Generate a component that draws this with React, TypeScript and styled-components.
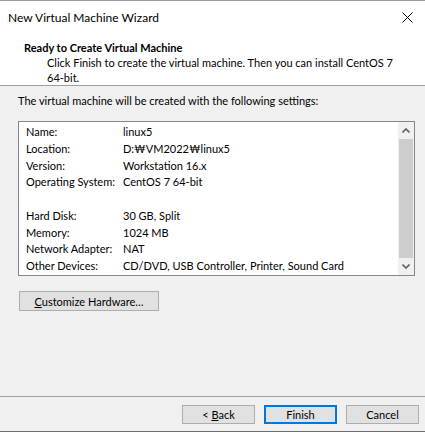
import React from 'react';
import styled, { createGlobalStyle } from 'styled-components';

const GlobalStyle = createGlobalStyle`
  *, *::before, *::after {
    box-sizing: border-box;
  }
  html, body {
    margin: 0;
    padding: 0;
    background: #ffffff;
  }
  body {
    font-family: Lato, 'Noto Sans', 'Liberation Sans', sans-serif;
    font-size: 11px;
    color: #000000;
  }
`;

const settings: [string, string][] = [
  ['Name:', 'linux5'],
  ['Location:', 'D:₩VM2022₩linux5'],
  ['Version:', 'Workstation 16.x'],
  ['Operating System:', 'CentOS 7 64-bit'],
  ['', ''],
  ['Hard Disk:', '30 GB, Split'],
  ['Memory:', '1024 MB'],
  ['Network Adapter:', 'NAT'],
  ['Other Devices:', 'CD/DVD, USB Controller, Printer, Sound Card'],
];

const App = () => {
  return (
    <>
      <GlobalStyle />
      <Window>
        <TitleBar>
          <TitleText>New Virtual Machine Wizard</TitleText>
          <CloseButton>
            <svg width="11" height="11" viewBox="0 0 11 11">
              <path d="M0.5 0.5 L10.5 10.5 M10.5 0.5 L0.5 10.5" stroke="#000" strokeWidth="1" />
            </svg>
          </CloseButton>
        </TitleBar>
        <Header>
          <HeaderTitle>Ready to Create Virtual Machine</HeaderTitle>
          <HeaderText>
            Click Finish to create the virtual machine. Then you can install CentOS 7 64-bit.
          </HeaderText>
        </Header>
        <Body>
          <Intro>The virtual machine will be created with the following settings:</Intro>
          <ListBox>
            <ListRows>
              {settings.map(([label, value], i) => (
                <Row key={i}>
                  <Label>{label}</Label>
                  <Value>{value}</Value>
                </Row>
              ))}
            </ListRows>
            <ScrollBar>
              <ScrollArrow>
                <svg width="8" height="5" viewBox="0 0 8 5">
                  <path d="M0.5 4.5 L4 1 L7.5 4.5" stroke="#606060" strokeWidth="1.6" fill="none" />
                </svg>
              </ScrollArrow>
              <ScrollThumb />
              <ScrollArrow>
                <svg width="8" height="5" viewBox="0 0 8 5">
                  <path d="M0.5 0.5 L4 4 L7.5 0.5" stroke="#606060" strokeWidth="1.6" fill="none" />
                </svg>
              </ScrollArrow>
            </ScrollBar>
          </ListBox>
          <CustomizeButton>
            <u>C</u>ustomize Hardware…
          </CustomizeButton>
        </Body>
        <Footer>
          <DialogButton>
            &lt; <u>B</u>ack
          </DialogButton>
          <DialogButton $primary>Finish</DialogButton>
          <DialogButton>Cancel</DialogButton>
        </Footer>
      </Window>
    </>
  );
};

export default App;

const Window = styled.div`
  width: 425px;
  height: 432px;
  border-top: 1px solid #9a9a9a;
  border-bottom: 1px solid #6f6f6f;
  display: flex;
  flex-direction: column;
  background: #f0f0f0;
  overflow: hidden;
`;

const TitleBar = styled.div`
  height: 31px;
  display: flex;
  align-items: center;
  justify-content: space-between;
  background: #ffffff;
  padding: 0 8px 0 8px;
  flex-shrink: 0;
`;

const TitleText = styled.span`
  font-size: 12px;
  color: #000000;
  margin-top: 2px;
`;

const CloseButton = styled.div`
  width: 24px;
  height: 20px;
  display: flex;
  align-items: center;
  justify-content: center;
  margin-top: 2px;
  margin-right: -2px;
`;

const Header = styled.div`
  height: 54px;
  background: #ffffff;
  border-bottom: 1px solid #a0a0a0;
  padding: 7.5px 30px 0 24px;
  flex-shrink: 0;
`;

const HeaderTitle = styled.div`
  font-weight: bold;
  line-height: 15px;
`;

const HeaderText = styled.div`
  line-height: 15px;
  padding-left: 23px;
`;

const Body = styled.div`
  height: 311px;
  padding: 7px 10px 0 18px;
  border-bottom: 1px solid #a0a0a0;
  flex-shrink: 0;
`;

const Intro = styled.div`
  line-height: 16px;
  margin-bottom: 12px;
`;

const ListBox = styled.div`
  width: 397px;
  height: 155px;
  border: 1px solid #828790;
  background: #ffffff;
  display: flex;
`;

const ListRows = styled.div`
  flex: 1;
  padding: 2px 0 0 7px;
`;

const Row = styled.div`
  display: flex;
  height: 16.75px;
  line-height: 16.75px;
  white-space: nowrap;
`;

const Label = styled.span`
  width: 97px;
  flex-shrink: 0;
`;

const Value = styled.span``;

const ScrollBar = styled.div`
  width: 16px;
  background: #f0f0f0;
  display: flex;
  flex-direction: column;
`;

const ScrollArrow = styled.div`
  height: 17px;
  display: flex;
  align-items: center;
  justify-content: center;
  flex-shrink: 0;
`;

const ScrollThumb = styled.div`
  flex: 1;
  margin: 0 1px;
  background: #cdcdcd;
`;

const CustomizeButton = styled.button`
  margin: 15px 0 0 1px;
  width: 140px;
  height: 20px;
  border: 1px solid #adadad;
  background: #e1e1e1;
  font-family: inherit;
  font-size: 11px;
  color: #000000;
  padding: 0;
`;

const Footer = styled.div`
  flex: 1;
  display: flex;
  justify-content: flex-end;
  align-items: flex-start;
  gap: 9px;
  padding: 8px 6px 0 0;
`;

const DialogButton = styled.button<{ $primary?: boolean }>`
  width: 73px;
  height: 19px;
  border: ${(p) => (p.$primary ? '2px solid #0078d7' : '1px solid #adadad')};
  background: #e1e1e1;
  font-family: inherit;
  font-size: 11px;
  color: #000000;
  padding: 0;
  line-height: 1;
`;
